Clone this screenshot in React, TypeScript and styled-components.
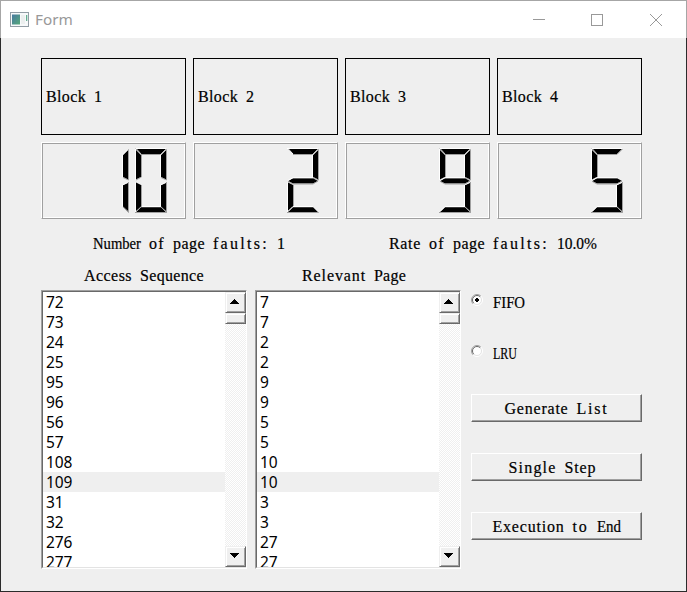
import React from "react";
import styled, { createGlobalStyle, css } from "styled-components";

const GlobalStyle = createGlobalStyle`
  * { box-sizing: border-box; }
  body { margin: 0; background: #efefef; overflow: hidden; }
`;

const CELL = 8;
const FONT_SIZE = 16;

// Advance widths in thousandths of an em, used to fit words to an 8px character cell.
const ADVANCE: Record<string, number> = {
  A: 722, B: 667, E: 611, F: 556, G: 722, I: 333, L: 611, N: 722, O: 722,
  P: 556, R: 667, S: 556, U: 722, a: 444, b: 500, c: 444, d: 500, e: 444,
  f: 333, g: 500, i: 278, k: 500, l: 278, m: 778, n: 500, o: 500, p: 500,
  q: 500, r: 333, s: 389, t: 278, u: 500, v: 500, x: 500, ":": 278,
  ".": 250, "%": 833,
};

const Window = styled.main`
  width: 687px;
  height: 592px;
  display: flex;
  flex-direction: column;
  background: #efefef;
  border: 1px solid #2b2b2b;
  border-top: 0;
`;

const TitleBar = styled.header`
  height: 38px;
  flex: none;
  margin: 0 -1px;
  padding: 0 23px 0 9px;
  display: flex;
  align-items: center;
  background: #fff;
  border: 1px solid #a6a6a6;
  border-bottom: 0;
`;

const Title = styled.h1`
  flex: 1;
  margin: 0 0 2px 6px;
  font: 400 15.3px/20px "Noto Sans", sans-serif;
  color: #999;
`;

const WindowControls = styled.div`
  display: flex;
  gap: 45px;
`;

const Form = styled.div`
  padding: 20px 0 0 40px;
  width: 641px;
`;

const BlockGrid = styled.section`
  display: grid;
  grid-template-columns: repeat(4, 145px);
  gap: 7px;
`;

const BlockLabel = styled.div`
  height: 77px;
  display: flex;
  align-items: center;
  padding-left: 4px;
  border: 1px solid #000;
`;

const LcdFrame = styled.div`
  height: 77px;
  border: 1px solid;
  border-color: #fff #a0a0a0 #a0a0a0 #fff;
  box-shadow: inset 1px 1px #a0a0a0, inset -1px -1px #fff;

  svg { display: block; margin: -1px; }
`;

const MonoLine = styled.span`
  display: block;
  white-space: nowrap;
  font: 400 ${FONT_SIZE}px/20px "Liberation Serif", serif;
  word-spacing: 4px;
  color: #000;
  -webkit-text-stroke: 0.2px #000;
`;

const Word = styled.span<{ $cells: number; $natural: number }>`
  ${({ $cells, $natural }) =>
    $natural > $cells * CELL
      ? css`
          display: inline-block;
          width: ${$cells * CELL}px;
          transform: scaleX(${($cells * CELL) / $natural});
          transform-origin: left;
        `
      : css`
          letter-spacing: ${($cells * CELL - $natural) / $cells}px;
        `}
`;

const Stats = styled.section`
  display: grid;
  grid-template-columns: 296px 296px;
  gap: 8px;
  margin-top: 15px;
  justify-items: center;
`;

const Workspace = styled.div`
  display: flex;
  margin-top: 12px;
`;

const ListColumn = styled.section<{ $shift?: number }>`
  width: 206px;
  margin-right: 8px;

  > ${MonoLine} {
    width: fit-content;
    margin: 0 auto 4px;
    padding-right: ${({ $shift = 0 }) => $shift}px;
  }
`;

const ListFrame = styled.div`
  height: 279px;
  border: 1px solid;
  border-color: #a0a0a0 #fff #fff #a0a0a0;
`;

const ListInner = styled.div`
  height: 277px;
  display: flex;
  border-top: 1px solid #696969;
  border-left: 1px solid #696969;
  border-bottom: 1px solid #e3e3e3;
`;

const Items = styled.ul`
  flex: 1;
  margin: 0;
  padding: 0;
  overflow: hidden;
  background: #fff;
  list-style: none;
`;

const Item = styled.li<{ $selected: boolean }>`
  height: 20px;
  padding-left: 3px;
  font: 400 15.5px/20px "Noto Sans", sans-serif;
  letter-spacing: -0.1px;
  color: #000;
  background: ${({ $selected }) => ($selected ? "#efefef" : "#fff")};
`;

const ScrollTrack = styled.div`
  width: 21px;
  display: flex;
  flex-direction: column;
  background: repeating-conic-gradient(#fff 0 25%, #efefef 0 50%) 0 0 / 2px 2px;
`;

const raised = css`
  background: #efefef;
  border: 1px solid;
  border-color: #efefef #696969 #696969 #efefef;
  box-shadow: inset 1px 1px #fff, inset -1px -1px #a0a0a0;
`;

const ScrollButton = styled.button`
  ${raised}
  height: 21px;
  flex: none;
  padding: 0 2px 2px 0;
  display: grid;
  place-items: center;
`;

const ScrollThumb = styled.div`
  ${raised}
  height: 11px;
  margin-bottom: auto;
`;

const Controls = styled.section`
  width: 171px;
  margin: 27px 0 0 2px;
  display: flex;
  flex-direction: column;
`;

const RadioRow = styled.label`
  height: 20px;
  margin-bottom: 31px;
  display: flex;
  gap: 10px;

  svg { flex: none; margin-top: 1px; }
`;

const Actions = styled.div`
  display: flex;
  flex-direction: column;
  gap: 31px;
  margin-top: -1px;
`;

const PushButton = styled.button<{ $shift?: number }>`
  height: 28px;
  padding: 4px ${({ $shift = 0 }) => $shift}px 2px 0;
  display: flex;
  justify-content: center;
  background: #efefef;
  border: 1px solid;
  border-color: #fff #696969 #696969 #fff;
  box-shadow: inset -1px -1px #a0a0a0;
`;

function Mono({ text }: { text: string }) {
  return (
    <MonoLine>
      {text.split(" ").map((word, i) => {
        const natural =
          ([...word].reduce((sum, ch) => sum + (ADVANCE[ch] ?? 500), 0) * FONT_SIZE) / 1000;
        return (
          <React.Fragment key={i}>
            {i > 0 && " "}
            <Word $cells={word.length} $natural={natural}>{word}</Word>
          </React.Fragment>
        );
      })}
    </MonoLine>
  );
}

type Segment = { fill: string; light: string; dark: string };

const SEGMENTS: Record<string, Segment> = {
  a: { fill: "M1 1H31L26 6H6Z", light: "M0 .5H31M.5 0L6 6", dark: "M6 6.5H26L31.5 1" },
  b: { fill: "M31 2V31.5L26 29V7Z", light: "M31 1.5L25.5 7V29", dark: "M31.5 1V32L26 29.5" },
  c: { fill: "M31 34.5V63L26 58.5V37Z", light: "M25.5 58.5V37L31 34.5", dark: "M31.5 34V64.5L26 59" },
  d: { fill: "M1 64L6 59.3H26L31 64Z", light: "M1 63.5L6 58.5H26", dark: "M0 64.5H31.5L26 59" },
  e: { fill: "M1 34.5L6 37V58.5L1 63Z", light: "M.5 64V34.5", dark: "M1 64L6.5 58.5V37" },
  f: { fill: "M1 2L6 7V29L1 31.5Z", light: "M.5 32V1", dark: "M.5 .5L6.5 7V29L1 32" },
  g: { fill: "M1 33L6 30.3H26L31 33L26 35.5H6Z", light: "M1 32.5L6 29.7H26", dark: "M1 33.3L6 36H26L31 33" },
};

const DIGITS: Record<string, string> = {
  "0": "abcdef", "1": "bc", "2": "abged", "5": "afgcd", "9": "abcdfg",
};

function Lcd({ value }: { value: string }) {
  return (
    <LcdFrame>
      <svg width="145" height="77" role="img" aria-label={value}>
        {[...value].map((digit, i) => (
          <g key={i} transform={`translate(${94 - 38 * (value.length - 1 - i)} 6)`} fill="none">
            {[...DIGITS[digit]].map((s) => (
              <g key={s}>
                <path d={SEGMENTS[s].fill} fill="#000" />
                <path d={SEGMENTS[s].dark} stroke="#a0a0a0" />
                <path d={SEGMENTS[s].light} stroke="#fff" />
              </g>
            ))}
          </g>
        ))}
      </svg>
    </LcdFrame>
  );
}

function Arrow({ down = false }: { down?: boolean }) {
  return (
    <svg width="9" height="5" shapeRendering="crispEdges">
      <path d={down ? "M0 0H9V1H8V2H7V3H6V4H5V5H4V4H3V3H2V2H1V1H0Z" : "M4 0H5V1H6V2H7V3H8V4H9V5H0V4H1V3H2V2H3V1H4Z"} />
    </svg>
  );
}

function Radio({ label, checked = false }: { label: string; checked?: boolean }) {
  return (
    <RadioRow>
      <svg width="12" height="12" viewBox="0 0 12 12" fill="none">
        <circle cx="6" cy="6" r="5" fill="#fff" />
        <path d="M2.1 9.9A5.5 5.5 0 0 1 9.9 2.1" stroke="#a0a0a0" />
        <path d="M2.8 9.2A4.5 4.5 0 0 1 9.2 2.8" stroke="#696969" />
        <path d="M9.9 2.1A5.5 5.5 0 0 1 2.1 9.9" stroke="#fff" />
        <path d="M9.2 2.8A4.5 4.5 0 0 1 2.8 9.2" stroke="#e3e3e3" />
        {checked && <path d="M5 4H7V5H8V7H7V8H5V7H4V5H5Z" fill="#000" />}
      </svg>
      <Mono text={label} />
    </RadioRow>
  );
}

function ListBox({ title, items, shift }: { title: string; items: number[]; shift?: number }) {
  return (
    <ListColumn $shift={shift}>
      <Mono text={title} />
      <ListFrame>
        <ListInner>
          <Items>
            {items.map((n, i) => (
              <Item key={i} $selected={i === 9}>{n}</Item>
            ))}
          </Items>
          <ScrollTrack>
            <ScrollButton aria-label="Scroll up"><Arrow /></ScrollButton>
            <ScrollThumb />
            <ScrollButton aria-label="Scroll down"><Arrow down /></ScrollButton>
          </ScrollTrack>
        </ListInner>
      </ListFrame>
    </ListColumn>
  );
}

function AppIcon() {
  return (
    <svg width="19" height="15" viewBox="0 0 19 15">
      <defs>
        <linearGradient id="pane" x1="0" y1="0" x2="1" y2="1">
          <stop offset="0" stopColor="#4779a0" />
          <stop offset="1" stopColor="#55a879" />
        </linearGradient>
      </defs>
      <rect x=".5" y=".5" width="18" height="14" fill="#f7f9fa" stroke="#929da5" />
      <rect x="2" y="2.5" width="8" height="10" fill="url(#pane)" />
      <rect x="11" y="3" width="4" height="9" fill="#ecefef" />
      <rect x="16" y="3" width="1.3" height="6" fill="#63ae91" />
    </svg>
  );
}

const SEQUENCE = [72, 73, 24, 25, 95, 96, 56, 57, 108, 109, 31, 32, 276, 277];
const PAGES = SEQUENCE.map((n) => Math.floor(n / 10));

export default function App() {
  return (
    <>
      <GlobalStyle />
      <Window>
        <TitleBar>
          <AppIcon />
          <Title>Form</Title>
          <WindowControls>
            <svg width="14" height="14"><path d="M2 6.5H14" stroke="#999" /></svg>
            <svg width="14" height="14"><rect x="1.5" y="1.5" width="11" height="11" fill="none" stroke="#999" /></svg>
            <svg width="14" height="14"><path d="M1 1L13 13M13 1L1 13" stroke="#999" /></svg>
          </WindowControls>
        </TitleBar>
        <Form>
          <BlockGrid>
            {[1, 2, 3, 4].map((n) => (
              <BlockLabel key={n}><Mono text={`Block ${n}`} /></BlockLabel>
            ))}
            {["10", "2", "9", "5"].map((v) => <Lcd key={v} value={v} />)}
          </BlockGrid>
          <Stats>
            <Mono text="Number of page faults: 1" />
            <Mono text="Rate of page faults: 10.0%" />
          </Stats>
          <Workspace>
            <ListBox title="Access Sequence" items={SEQUENCE} />
            <ListBox title="Relevant Page" items={PAGES} shift={8} />
            <Controls>
              <Radio label="FIFO" checked />
              <Radio label="LRU" />
              <Actions>
                <PushButton><Mono text="Generate List" /></PushButton>
                <PushButton $shift={8}><Mono text="Single Step" /></PushButton>
                <PushButton><Mono text="Execution to End" /></PushButton>
              </Actions>
            </Controls>
          </Workspace>
        </Form>
      </Window>
    </>
  );
}
